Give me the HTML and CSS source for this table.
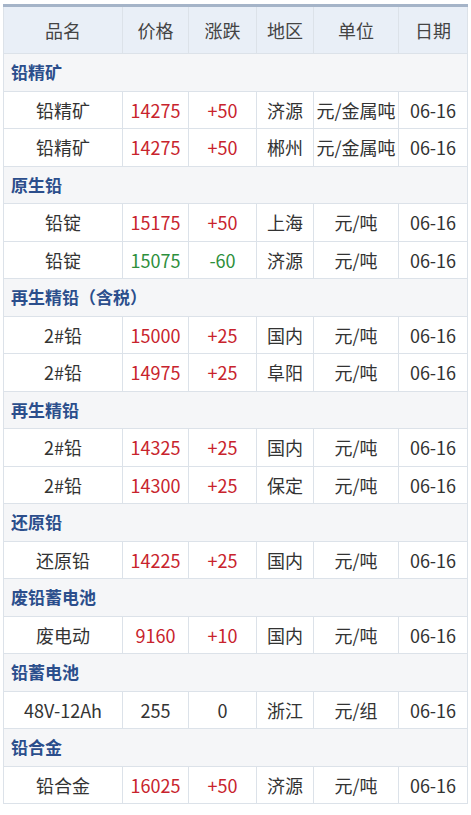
FILE: index.html
```html
<!DOCTYPE html>
<html lang="zh">
<head>
<meta charset="utf-8">
<link rel="stylesheet" href="styles.css">
</head>
<body>
<table class="price">
  <colgroup>
    <col class="c1"><col class="c2"><col class="c3"><col class="c4"><col class="c5"><col class="c6">
  </colgroup>
  <thead>
    <tr><th>品名</th><th>价格</th><th>涨跌</th><th>地区</th><th>单位</th><th>日期</th></tr>
  </thead>
  <tbody>
    <tr class="sec"><td colspan="6">铅精矿</td></tr>
    <tr><td>铅精矿</td><td class="up">14275</td><td class="up">+50</td><td>济源</td><td>元/金属吨</td><td>06-16</td></tr>
    <tr><td>铅精矿</td><td class="up">14275</td><td class="up">+50</td><td>郴州</td><td>元/金属吨</td><td>06-16</td></tr>
    <tr class="sec"><td colspan="6">原生铅</td></tr>
    <tr><td>铅锭</td><td class="up">15175</td><td class="up">+50</td><td>上海</td><td>元/吨</td><td>06-16</td></tr>
    <tr><td>铅锭</td><td class="down">15075</td><td class="down">-60</td><td>济源</td><td>元/吨</td><td>06-16</td></tr>
    <tr class="sec"><td colspan="6">再生精铅（含税）</td></tr>
    <tr><td>2#铅</td><td class="up">15000</td><td class="up">+25</td><td>国内</td><td>元/吨</td><td>06-16</td></tr>
    <tr><td>2#铅</td><td class="up">14975</td><td class="up">+25</td><td>阜阳</td><td>元/吨</td><td>06-16</td></tr>
    <tr class="sec"><td colspan="6">再生精铅</td></tr>
    <tr><td>2#铅</td><td class="up">14325</td><td class="up">+25</td><td>国内</td><td>元/吨</td><td>06-16</td></tr>
    <tr><td>2#铅</td><td class="up">14300</td><td class="up">+25</td><td>保定</td><td>元/吨</td><td>06-16</td></tr>
    <tr class="sec"><td colspan="6">还原铅</td></tr>
    <tr><td>还原铅</td><td class="up">14225</td><td class="up">+25</td><td>国内</td><td>元/吨</td><td>06-16</td></tr>
    <tr class="sec"><td colspan="6">废铅蓄电池</td></tr>
    <tr><td>废电动</td><td class="up">9160</td><td class="up">+10</td><td>国内</td><td>元/吨</td><td>06-16</td></tr>
    <tr class="sec"><td colspan="6">铅蓄电池</td></tr>
    <tr><td>48V-12Ah</td><td>255</td><td>0</td><td>浙江</td><td>元/组</td><td>06-16</td></tr>
    <tr class="sec"><td colspan="6">铅合金</td></tr>
    <tr><td>铅合金</td><td class="up">16025</td><td class="up">+50</td><td>济源</td><td>元/吨</td><td>06-16</td></tr>
  </tbody>
</table>
</body>
</html>
```
FILE: styles.css
```css
html, body {
  margin: 0;
  padding: 0;
  background: #fff;
}
body {
  padding: 4px 0 0 3px;
  font-family: "Microsoft YaHei", "Noto Sans CJK SC", "Noto Sans", sans-serif;
  color: #333;
}
.price {
  width: 464px;
  border-collapse: collapse;
  table-layout: fixed;
  border-top: 3px solid #a5b4c8;
  font-size: 18px;
}
.c1 { width: 119px; }
.c2 { width: 66px; }
.c3 { width: 68px; }
.c4 { width: 57px; }
.c5 { width: 85px; }
.c6 { width: 69px; }
.price th,
.price td {
  border: 1px solid #dce2e9;
  text-align: center;
  padding: 0;
  white-space: nowrap;
  line-height: 20px;
}
.price th {
  height: 46px;
  background: #e9eff7;
  font-weight: normal;
  color: #444;
}
.price td {
  height: 36.5px;
}
.price tr.sec td {
  background: #f5f6f8;
  text-align: left;
  padding-left: 7px;
  font-size: 17px;
  font-weight: bold;
  color: #2b4e8c;
}
.up { color: #c8232c; }
.down { color: #2d8f3c; }
```
